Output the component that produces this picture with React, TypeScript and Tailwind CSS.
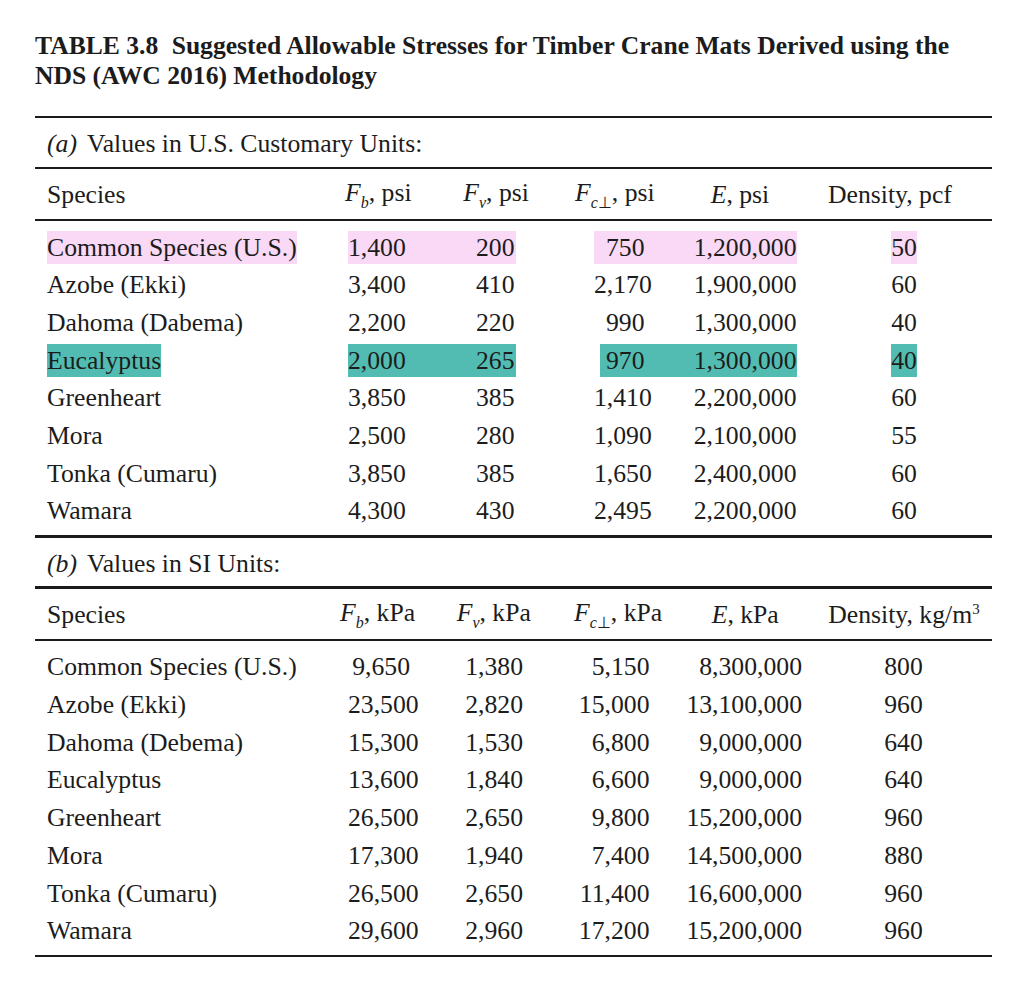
import React from "react";

type Row = {
  name: string;
  fb: string;
  fv: string;
  fc: string;
  e: string;
  d: string;
  hl?: "pink" | "teal";
};

const rowsA: Row[] = [
  { name: "Common Species (U.S.)", fb: "1,400", fv: "200", fc: "750", e: "1,200,000", d: "50", hl: "pink" },
  { name: "Azobe (Ekki)", fb: "3,400", fv: "410", fc: "2,170", e: "1,900,000", d: "60" },
  { name: "Dahoma (Dabema)", fb: "2,200", fv: "220", fc: "990", e: "1,300,000", d: "40" },
  { name: "Eucalyptus", fb: "2,000", fv: "265", fc: "970", e: "1,300,000", d: "40", hl: "teal" },
  { name: "Greenheart", fb: "3,850", fv: "385", fc: "1,410", e: "2,200,000", d: "60" },
  { name: "Mora", fb: "2,500", fv: "280", fc: "1,090", e: "2,100,000", d: "55" },
  { name: "Tonka (Cumaru)", fb: "3,850", fv: "385", fc: "1,650", e: "2,400,000", d: "60" },
  { name: "Wamara", fb: "4,300", fv: "430", fc: "2,495", e: "2,200,000", d: "60" },
];

const rowsB: Row[] = [
  { name: "Common Species (U.S.)", fb: "9,650", fv: "1,380", fc: "5,150", e: "8,300,000", d: "800" },
  { name: "Azobe (Ekki)", fb: "23,500", fv: "2,820", fc: "15,000", e: "13,100,000", d: "960" },
  { name: "Dahoma (Debema)", fb: "15,300", fv: "1,530", fc: "6,800", e: "9,000,000", d: "640" },
  { name: "Eucalyptus", fb: "13,600", fv: "1,840", fc: "6,600", e: "9,000,000", d: "640" },
  { name: "Greenheart", fb: "26,500", fv: "2,650", fc: "9,800", e: "15,200,000", d: "960" },
  { name: "Mora", fb: "17,300", fv: "1,940", fc: "7,400", e: "14,500,000", d: "880" },
  { name: "Tonka (Cumaru)", fb: "26,500", fv: "2,650", fc: "11,400", e: "16,600,000", d: "960" },
  { name: "Wamara", fb: "29,600", fv: "2,960", fc: "17,200", e: "15,200,000", d: "960" },
];

const BG: Record<string, string> = {
  pink: "bg-[#f9d9f6]",
  teal: "bg-[#53bcb2]",
  none: "",
};

function Rule() {
  return <div className="h-[2.5px] bg-[#1a1a1a]" />;
}

function F({ sub }: { sub: React.ReactNode }) {
  return (
    <>
      <span className="italic">F</span>
      <span className="text-[16px] align-[-7px]">{sub}</span>
    </>
  );
}

function RowA({ r }: { r: Row }) {
  const bg = BG[r.hl ?? "none"];
  return (
    <div className="flex h-[37.7px] items-center pl-[12px] leading-[33px]">
      <div className="w-[301px] shrink-0">
        <span className={`inline-block ${bg}`}>{r.name}</span>
      </div>
      <div className={`flex w-[168px] shrink-0 ${bg}`}>
        <div className="w-[57.5px] text-right">{r.fb}</div>
        <div className="w-[109px] text-right">{r.fv}</div>
      </div>
      <div className="w-[78px] shrink-0" />
      <div className="flex w-[203px] shrink-0 justify-end">
        <div className={`flex ${r.hl === "teal" ? "w-[197px]" : "w-[203px]"} ${bg}`}>
          <div className="flex-1 text-right">{r.fc}</div>
          <div className="w-[152.5px] pr-[0.5px] text-right">{r.e}</div>
        </div>
      </div>
      <div className="w-[77px] shrink-0" />
      <div className="w-[60px] shrink-0 text-center">
        <span className={`inline-block ${bg}`}>{r.d}</span>
      </div>
    </div>
  );
}

function RowB({ r }: { r: Row }) {
  return (
    <div className="flex h-[37.7px] items-center pl-[12px] leading-[33px]">
      <div className="w-[301px] shrink-0">{r.name}</div>
      <div className="w-[62px] shrink-0 text-right">{r.fb}</div>
      <div className="w-[113px] shrink-0 text-right">{r.fv}</div>
      <div className="w-[126.5px] shrink-0 text-right">{r.fc}</div>
      <div className="w-[152.5px] shrink-0 text-right">{r.e}</div>
      <div className="w-[71.5px] shrink-0" />
      <div className="w-[60px] shrink-0 text-center">{r.d}</div>
    </div>
  );
}

export default function App() {
  return (
    <div className="min-h-[987px] w-[1024px] bg-white text-[#1c1c1c] font-['Liberation_Serif','Times_New_Roman',serif]">
      <div className="ml-[35px] w-[957px] pt-[30.5px]">
        <h1 className="mb-[24px] text-[25.6px] font-bold leading-[30.5px]">
          TABLE 3.8 <span className="ml-[7px]">Suggested Allowable Stresses for Timber Crane Mats Derived using the</span>
          <br />
          NDS (AWC 2016) Methodology
        </h1>

        <div className="text-[25.7px]">
          <Rule />
          <div className="flex h-[48.5px] items-center pl-[12px] pt-[4px]">
            <span className="italic">(a)</span>
            <span className="ml-[10px]">Values in U.S. Customary Units:</span>
          </div>
          <Rule />
          <div className="flex h-[49.8px] items-center pl-[12px] pt-[2px]">
            <div className="w-[298px] shrink-0">Species</div>
            <div className="w-[118.3px] shrink-0">
              <F sub={<span className="italic">b</span>} />, psi
            </div>
            <div className="w-[111.7px] shrink-0">
              <F sub={<span className="italic">v</span>} />, psi
            </div>
            <div className="w-[135.7px] shrink-0">
              <F sub={<><span className="italic">c</span>⊥</>} />, psi
            </div>
            <div className="w-[117.3px] shrink-0">
              <span className="italic">E</span>, psi
            </div>
            <div className="shrink-0">Density, pcf</div>
          </div>
          <Rule />
          <div className="pt-[6.9px] pb-[5.5px]">
            {rowsA.map((r) => (
              <RowA key={r.name} r={r} />
            ))}
          </div>
          <Rule />
          <div className="flex h-[48.7px] items-center pl-[12px] pt-[4px]">
            <span className="italic">(b)</span>
            <span className="ml-[10px]">Values in SI Units:</span>
          </div>
          <Rule />
          <div className="flex h-[49.8px] items-center pl-[12px] pt-[2px]">
            <div className="w-[293px] shrink-0">Species</div>
            <div className="w-[116.7px] shrink-0">
              <F sub={<span className="italic">b</span>} />, kPa
            </div>
            <div className="w-[117.3px] shrink-0">
              <F sub={<span className="italic">v</span>} />, kPa
            </div>
            <div className="w-[137.7px] shrink-0">
              <F sub={<><span className="italic">c</span>⊥</>} />, kPa
            </div>
            <div className="w-[116.6px] shrink-0">
              <span className="italic">E</span>, kPa
            </div>
            <div className="shrink-0">
              Density, kg/m<span className="text-[15px] align-[9px]">3</span>
            </div>
          </div>
          <Rule />
          <div className="pt-[6.9px] pb-[5px]">
            {rowsB.map((r) => (
              <RowB key={r.name} r={r} />
            ))}
          </div>
          <Rule />
        </div>
      </div>
    </div>
  );
}
